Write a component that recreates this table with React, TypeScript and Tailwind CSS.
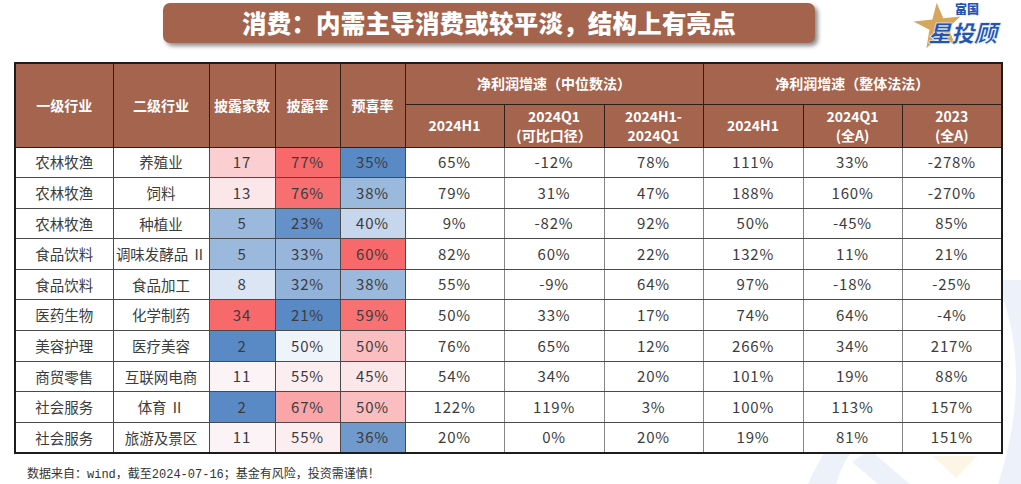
import React from "react";

type Row = [string, string, number, number, number, string, string, string, string, string, string];

const rows: Row[] = [
  ["农林牧渔", "养殖业", 17, 77, 35, "65%", "-12%", "78%", "111%", "33%", "-278%"],
  ["农林牧渔", "饲料", 13, 76, 38, "79%", "31%", "47%", "188%", "160%", "-270%"],
  ["农林牧渔", "种植业", 5, 23, 40, "9%", "-82%", "92%", "50%", "-45%", "85%"],
  ["食品饮料", "调味发酵品 Ⅱ", 5, 33, 60, "82%", "60%", "22%", "132%", "11%", "21%"],
  ["食品饮料", "食品加工", 8, 32, 38, "55%", "-9%", "64%", "97%", "-18%", "-25%"],
  ["医药生物", "化学制药", 34, 21, 59, "50%", "33%", "17%", "74%", "64%", "-4%"],
  ["美容护理", "医疗美容", 2, 50, 50, "76%", "65%", "12%", "266%", "34%", "217%"],
  ["商贸零售", "互联网电商", 11, 55, 45, "54%", "34%", "20%", "101%", "19%", "88%"],
  ["社会服务", "体育 Ⅱ", 2, 67, 50, "122%", "119%", "3%", "100%", "113%", "157%"],
  ["社会服务", "旅游及景区", 11, 55, 36, "20%", "0%", "20%", "19%", "81%", "151%"],
];

const widths = [98, 96, 66, 65, 65, 99, 100, 99, 100, 99, 100];

// excel style 3-colour scale: blue (min) / white (median) / red (max)
const RED = [248, 105, 107];
const WHITE = [252, 252, 255];
const BLUE = [90, 138, 198];

function heat(v: number, col: number[]) {
  const s = [...col].sort((a, b) => a - b);
  const min = s[0];
  const max = s[s.length - 1];
  const mid = (s[4] + s[5]) / 2;
  let to = RED;
  let t = 0;
  if (v >= mid) {
    t = max === mid ? 0 : (v - mid) / (max - mid);
  } else {
    to = BLUE;
    t = (mid - v) / (mid - min);
  }
  const c = WHITE.map((w, i) => Math.round(w + (to[i] - w) * t));
  return `rgb(${c[0]},${c[1]},${c[2]})`;
}

const cols = [2, 3, 4].map((i) => rows.map((r) => r[i] as number));

function Logo() {
  return (
    <div className="relative w-[100px] h-[46px] mt-[2px]">
      <svg className="absolute left-0 top-[1px]" width="50" height="46" viewBox="0 0 50 46">
        <polygon
          points="27,0 32,16 49,16 36,26 41,44 27,33 12,44 17,26 2,16 21,16"
          fill="#d6a65c"
          transform="rotate(-6 25 22)"
        />
      </svg>
      <div className="absolute left-[43px] top-[1px] text-[12px] leading-[12px] font-black text-[#1f55b3]">
        富国
      </div>
      <div className="absolute left-[16px] top-[19px] text-[23px] leading-[23px] font-black italic text-[#1f55b3] [-webkit-text-stroke:0.5px_#ffffff]">
        星投顾
      </div>
    </div>
  );
}

function Watermark() {
  return (
    <svg
      className="absolute left-[760px] top-[280px] pointer-events-none"
      width="261"
      height="204"
      viewBox="0 0 261 204"
    >
      <path d="M 236 0 Q 275 90 238 204 L 261 204 L 261 0 Z" fill="#edf2fa" />
      <path d="M 48 204 Q 58 180 80 150 L 100 160 Q 82 182 76 204 Z" fill="#edf2fa" />
      <path d="M 110 170 L 150 204 L 118 204 L 92 182 Z" fill="#edf2fa" />
      <polygon points="173,176 217,176 196,198" fill="#fdf6e6" />
    </svg>
  );
}

export default function App() {
  const th = "border border-[#2e2019] text-white font-bold text-[14px] leading-[19px] text-center";
  const td = "border border-[#4a4a4a] text-center text-[#3c3c3c] h-[30.6px] p-0";
  return (
    <div
      className="relative w-[1021px] h-[484px] bg-white overflow-hidden"
      style={{ fontFamily: '"Noto Sans CJK SC", "Noto Sans", sans-serif' }}
    >
      <Watermark />
      <div className="relative flex items-start h-[62px]">
        <div className="ml-[163px] mt-[3px] w-[652px] h-[40px] rounded-[7px] bg-[#a4634d] shadow-[3px_3px_4px_rgba(0,0,0,0.45)] flex items-center justify-center">
          <span className="text-white font-black text-[24.5px] leading-none tracking-[0.2px]">
            消费：内需主导消费或较平淡，结构上有亮点
          </span>
        </div>
        <div className="ml-[97px]">
          <Logo />
        </div>
      </div>

      <table className="relative ml-[14px] table-fixed border-collapse border-2 border-[#1c1c1c] bg-white">
        <colgroup>
          {widths.map((w, i) => (
            <col key={i} style={{ width: w }} />
          ))}
        </colgroup>
        <thead className="bg-[#a5644e]">
          <tr className="h-[41px]">
            <th rowSpan={2} className={th}>一级行业</th>
            <th rowSpan={2} className={th}>二级行业</th>
            <th rowSpan={2} className={th}>披露家数</th>
            <th rowSpan={2} className={th}>披露率</th>
            <th rowSpan={2} className={th}>预喜率</th>
            <th colSpan={3} className={th}>净利润增速（中位数法）</th>
            <th colSpan={3} className={th}>净利润增速（整体法法）</th>
          </tr>
          <tr className="h-[43px]">
            <th className={th}>2024H1</th>
            <th className={th}>
              2024Q1
              <br />
              (可比口径）
            </th>
            <th className={th}>
              2024H1-
              <br />
              2024Q1
            </th>
            <th className={th}>2024H1</th>
            <th className={th}>
              2024Q1
              <br />
              (全A)
            </th>
            <th className={th}>
              2023
              <br />
              (全A)
            </th>
          </tr>
        </thead>
        <tbody>
          {rows.map((r, ri) => (
            <tr key={ri}>
              <td className={`${td} text-[14.5px]`}>{r[0]}</td>
              <td className={`${td} text-[14.5px]`}>{r[1]}</td>
              {[2, 3, 4].map((ci, k) => (
                <td
                  key={ci}
                  className={`${td} text-[15px] tracking-[0.8px]`}
                  style={{ backgroundColor: heat(r[ci] as number, cols[k]) }}
                >
                  {ci === 2 ? r[ci] : `${r[ci]}%`}
                </td>
              ))}
              {r.slice(5).map((v, k) => (
                <td key={k} className={`${td} text-[15px] tracking-[0.8px] border-x-[#858585]`}>
                  {v}
                </td>
              ))}
            </tr>
          ))}
        </tbody>
      </table>

      <div
        className="relative ml-[27px] mt-[14px] text-[12px] leading-[14px] text-[#333]"
        style={{ fontFamily: '"Liberation Mono", "Noto Sans CJK SC", monospace' }}
      >
        数据来自：wind，截至2024-07-16；基金有风险，投资需谨慎！
      </div>
    </div>
  );
}
